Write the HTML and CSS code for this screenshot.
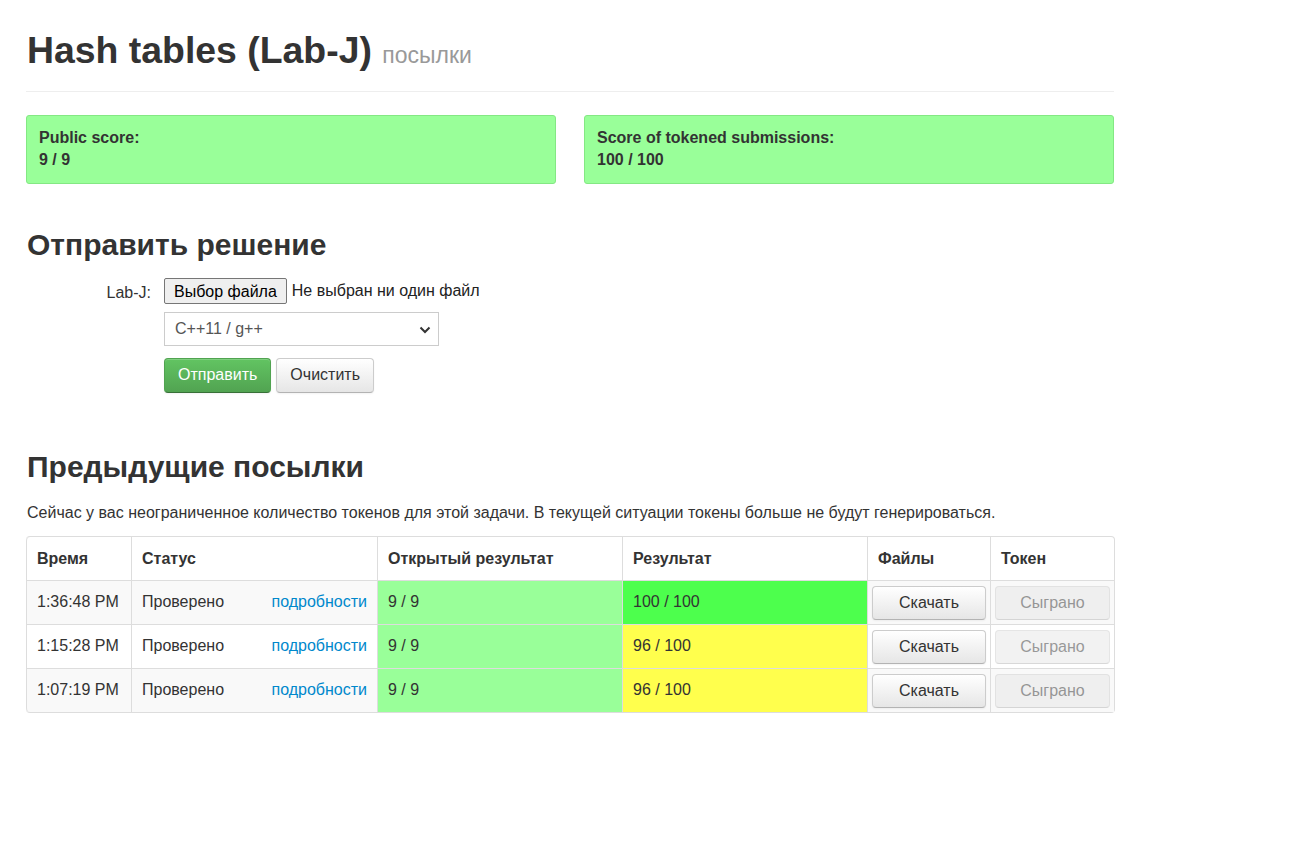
FILE: index.html
```html
<!DOCTYPE html>
<html lang="ru">
<head>
<meta charset="utf-8">
<title>Hash tables (Lab-J)</title>
<link rel="stylesheet" href="styles.css">
</head>
<body>
<div class="container">
  <div class="page-header">
    <h1>Hash tables (Lab-J) <small>посылки</small></h1>
  </div>

  <div class="scores">
    <div class="score-box">
      <div>Public score:</div>
      <div>9 / 9</div>
    </div>
    <div class="score-box">
      <div>Score of tokened submissions:</div>
      <div>100 / 100</div>
    </div>
  </div>

  <h2 class="section-title first">Отправить решение</h2>
  <form class="submit-form">
    <div class="form-row">
      <label class="control-label">Lab-J:</label>
      <div class="controls file-row">
        <button type="button" class="file-btn">Выбор файла</button>
        <span class="file-name">Не выбран ни один файл</span>
      </div>
    </div>
    <div class="form-row">
      <span class="control-label"></span>
      <div class="controls">
        <div class="select">
          <span>C++11 / g++</span>
          <svg class="chev" width="12" height="8" viewBox="0 0 12 8"><path d="M1.5 1.5 L6 6 L10.5 1.5" fill="none" stroke="#333" stroke-width="2"/></svg>
        </div>
      </div>
    </div>
    <div class="form-row">
      <span class="control-label"></span>
      <div class="controls actions">
        <button type="button" class="btn btn-success">Отправить</button>
        <button type="button" class="btn">Очистить</button>
      </div>
    </div>
  </form>

  <h2 class="section-title second">Предыдущие посылки</h2>
  <p class="tokens-note">Сейчас у вас неограниченное количество токенов для этой задачи. В текущей ситуации токены больше не будут генерироваться.</p>

  <table class="subs">
    <colgroup>
      <col class="c-time"><col class="c-status"><col class="c-pub"><col class="c-res"><col class="c-files"><col class="c-token">
    </colgroup>
    <thead>
      <tr><th>Время</th><th>Статус</th><th>Открытый результат</th><th>Результат</th><th>Файлы</th><th>Токен</th></tr>
    </thead>
    <tbody>
      <tr class="odd">
        <td>1:36:48 PM</td>
        <td><div class="status"><span>Проверено</span><a href="#">подробности</a></div></td>
        <td class="score-ok">9 / 9</td>
        <td class="score-full">100 / 100</td>
        <td class="btn-cell"><button type="button" class="btn btn-block">Скачать</button></td>
        <td class="btn-cell"><button type="button" class="btn btn-block" disabled>Сыграно</button></td>
      </tr>
      <tr>
        <td>1:15:28 PM</td>
        <td><div class="status"><span>Проверено</span><a href="#">подробности</a></div></td>
        <td class="score-ok">9 / 9</td>
        <td class="score-part">96 / 100</td>
        <td class="btn-cell"><button type="button" class="btn btn-block">Скачать</button></td>
        <td class="btn-cell"><button type="button" class="btn btn-block" disabled>Сыграно</button></td>
      </tr>
      <tr class="odd">
        <td>1:07:19 PM</td>
        <td><div class="status"><span>Проверено</span><a href="#">подробности</a></div></td>
        <td class="score-ok">9 / 9</td>
        <td class="score-part">96 / 100</td>
        <td class="btn-cell"><button type="button" class="btn btn-block">Скачать</button></td>
        <td class="btn-cell"><button type="button" class="btn btn-block" disabled>Сыграно</button></td>
      </tr>
    </tbody>
  </table>
</div>
</body>
</html>
```

FILE: styles.css
```css
* { box-sizing: border-box; }

body {
  margin: 0;
  font-family: "Liberation Sans", Arial, sans-serif;
  font-size: 16px;
  line-height: 20px;
  color: #333;
  background: #fff;
}

.container {
  width: 1088px;
  margin-left: 26px;
  padding-top: 10px;
}

.page-header {
  border-bottom: 1px solid #eee;
  padding-bottom: 6px;
  margin-bottom: 23px;
}

.page-header h1 {
  margin: 20px 0 10px 1px;
  font-size: 37.4px;
  line-height: 40px;
  font-weight: bold;
}

.page-header h1 small {
  font-size: 23px;
  font-weight: normal;
  color: #999;
}

.scores {
  display: flex;
  gap: 28px;
}

.score-box {
  flex: 1;
  background: #99ff99;
  border: 1px solid #84e884;
  border-radius: 3px;
  padding: 11px 12px 12px;
  font-weight: bold;
  line-height: 22px;
}

.section-title {
  font-size: 30px;
  line-height: 40px;
  font-weight: bold;
  margin: 0 0 0 1px;
}
.section-title.first { margin-top: 41px; margin-bottom: 13px; }
.section-title.second { margin-top: 54px; margin-bottom: 16px; }

.submit-form {
  display: flex;
  flex-direction: column;
  gap: 8px;
}

.form-row {
  display: flex;
  align-items: center;
}

.control-label {
  width: 125px;
  text-align: right;
  padding-top: 4px;
}

.controls { margin-left: 13px; }

.file-row {
  display: flex;
  align-items: center;
}

.file-btn {
  font-family: "Liberation Sans", Arial, sans-serif;
  font-size: 16px;
  line-height: 18px;
  color: #000;
  background: #efefef;
  border: 1px solid #767676;
  border-radius: 2px;
  padding: 3px 9px 2px;
  height: 26px;
  margin-right: 5px;
}

.file-name {
  font-size: 16px;
  color: #222;
}

.select {
  width: 275px;
  height: 34px;
  border: 1px solid #ccc;
  border-radius: 0;
  background: #fff;
  color: #555;
  display: flex;
  align-items: center;
  justify-content: space-between;
  padding: 0 7px 0 10px;
}

.chev { margin-top: 1px; }

.actions {
  display: flex;
  gap: 5px;
  margin-top: 4px;
}

.btn {
  font-family: "Liberation Sans", Arial, sans-serif;
  font-size: 16px;
  line-height: 20px;
  color: #333;
  text-align: center;
  padding: 6px 13px 7px;
  border: 1px solid #ccc;
  border-bottom-color: #b3b3b3;
  border-radius: 4px;
  background: linear-gradient(to bottom, #ffffff, #e6e6e6);
  box-shadow: inset 0 1px 0 rgba(255,255,255,.2), 0 1px 2px rgba(0,0,0,.05);
  cursor: pointer;
}

.btn-success {
  color: #fff;
  background: linear-gradient(to bottom, #62c462, #51a351);
  border-color: #51a351 #51a351 #387038;
}

.btn[disabled] {
  background: #e6e6e6;
  color: #333;
  opacity: .5;
  box-shadow: none;
  cursor: default;
}

.btn-block {
  display: block;
  width: 100%;
  padding: 6px 0;
}

.tokens-note { margin: 0 0 13px 1px; }

.subs {
  width: 100%;
  border-collapse: separate;
  border-spacing: 0;
  border: 1px solid #ddd;
  border-left: 0;
  border-radius: 4px;
  table-layout: fixed;
}

.c-time { width: 105px; }
.c-status { width: 246px; }
.c-pub { width: 245px; }
.c-res { width: 245px; }
.c-files { width: 123px; }
.c-token { width: 124px; }

.subs th, .subs td {
  text-align: left;
  padding: 11px 10px 12px 10px;
  border-left: 1px solid #ddd;
  border-top: 1px solid #ddd;
  line-height: 20px;
  vertical-align: middle;
}

.subs thead th { border-top: 0; padding: 12px 10px 11px 10px; }

.subs tbody tr.odd td { background: #f9f9f9; }

.subs td.score-ok, .subs tr.odd td.score-ok { background: #99ff99; }
.subs td.score-full, .subs tr.odd td.score-full { background: #4dff4d; }
.subs td.score-part, .subs tr.odd td.score-part { background: #ffff4d; }

.subs td.btn-cell { padding: 4px; }

.status {
  display: flex;
  justify-content: space-between;
}

.status a {
  color: #0088cc;
  text-decoration: none;
}

.subs thead th:first-child { border-top-left-radius: 4px; }
.subs tbody tr:last-child td:first-child { border-bottom-left-radius: 4px; }
```
